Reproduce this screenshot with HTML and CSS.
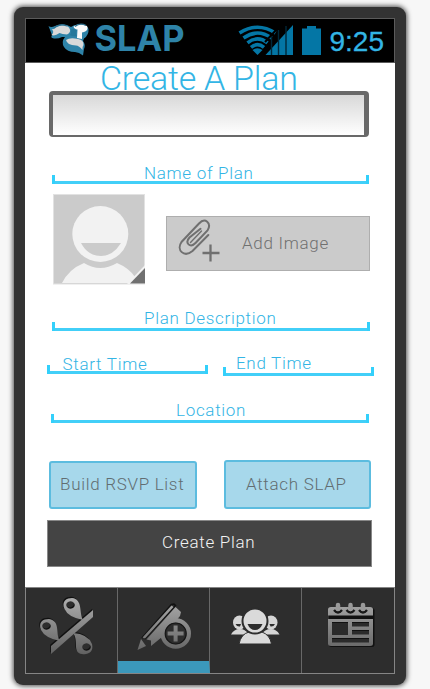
FILE: index.html
```html
<!DOCTYPE html>
<html lang="en">
<head>
<meta charset="utf-8">
<title>Create A Plan</title>
<link rel="stylesheet" href="styles.css">
</head>
<body>
<div class="phone">
  <div class="screen">
    <header class="status">
      <svg class="logo" width="140" height="43" viewBox="48 20 140 43">
        <path d="M48.500 27 L52 36 Q50 39 54 39.500 Q58 40 62 38 L65 38 Q61 43 64 48 Q67 53 75 53 Q79 53 83 56.500 L84 50 Q86 46 83 42 L84 39.500 Q89 36 88.500 30 Q87 25 80 25.500 Q74 25 71 28 Q64 23 55 27 Q51 29 48.500 27Z" fill="#2e83a8"/>
        <g fill="#d9d9d9">
          <path d="M51.500 30 Q54 31 56 28.500 Q64 24 69 28.500 Q72 33 67 35.500 Q62 35 59.500 34 Q55 37.500 51.500 36 Q55 33 51.500 30Z"/>
          <path d="M66 41 Q70 38 78 40 Q84 41 83.500 46 Q82 48 82.500 51 Q79 46.500 76 46.500 Q67 46 66 41Z"/>
        </g>
        <path d="M73.500 27.500 Q80 23.500 87 27 Q89 31 84 33 L82 33.500 V40 L77 39 L77.500 30.500 Q74 30 73.500 27.500Z" fill="#fafafa"/>
        <path d="M54 28.500 Q60 24 67 27M75 27.500 Q80 23.500 86 26.500" fill="none" stroke="#2f6f8d" stroke-width="1.200"/>
        <path d="M70.500 30.500 Q74 29 77 31.500 Q75 34 77 37 Q73 38 69.500 36 Q72 34 70.500 30.500Z" fill="#25789b"/>
        <text class="brand" x="94.500" y="52.300" textLength="90" lengthAdjust="spacingAndGlyphs">SLAP</text>
      </svg>
      <svg class="signals" width="84" height="34" viewBox="237 24 84 34">
        <g fill="none" stroke="#0476a5" stroke-width="3.600">
          <path d="M239.500 33 Q257.500 21.500 275.500 33"/>
          <path d="M243.500 38 Q257.500 28 271.500 38"/>
          <path d="M247.500 42.800 Q257.500 35 267.500 42.800"/>
          <path d="M251 47.300 Q257.500 42 264 47.300"/>
        </g>
        <path d="M252.500 50 Q257.500 46.500 262.500 50 L257.500 55Z" fill="#0476a5"/>
        <path d="M265.500 55 L293 25 V55Z" fill="#0476a5"/>
        <path d="M271.500 36V55M278.500 30V55M286 26V55" stroke="#00283a" stroke-width="1.400"/>
        <path d="M277 29 L265 42" stroke="#000" stroke-width="2"/>
        <path d="M302 28.500h5v-2.500h9v2.500h5V55h-19z" fill="#0476a5"/>
      </svg>
      <span class="clock">9:25</span>
    </header>

    <main class="form">
      <h1 class="title">Create A Plan</h1>
      <div class="input"></div>
      <div class="field name"><span>Name of Plan</span></div>
      <div class="image-row">
        <svg class="avatar" width="92" height="91" viewBox="0 0 92 91">
          <rect x=".5" y=".5" width="91" height="89.500" fill="#cbcbcb" stroke="#e2e2e2"/>
          <path d="M9 89 Q16 75 31 69 Q47 79 64 69 Q76 74 82 83 L76 89Z" fill="#f2f2f2"/>
          <circle cx="47.300" cy="40" r="28" fill="#f2f2f2"/>
          <path d="M28 49H68Q60 62 48 62Q35 62 28 49Z" fill="#cbcbcb"/>
          <path d="M74 90 L92 71V90Z" fill="#f2f2f2"/>
          <path d="M77 89.500 L92 74V89.500Z" fill="#707070"/>
        </svg>
        <div class="add-image">
          <svg width="46" height="50" viewBox="176 217 46 50" fill="none" stroke="#707070" stroke-linecap="round">
            <path d="M208.300 235 L192.500 251 C184 258 176 250 181.500 242 L199 223.500 C205 217 212 223 207.500 230.500 L195.500 243 C190 248.500 184.500 243 189.500 237.500 L200.500 228.800" stroke-width="2"/>
            <path d="M190.500 242.500 L201.500 231" stroke-width="1.400"/>
            <path d="M210.500 244.500v17M202.500 253h17" stroke-width="2.300" stroke-linecap="butt"/>
          </svg>
          <span>Add Image</span>
        </div>
      </div>
      <div class="field description"><span>Plan Description</span></div>
      <div class="times">
        <div class="field start"><span>Start Time</span></div>
        <div class="field end"><span>End Time</span></div>
      </div>
      <div class="field location"><span>Location</span></div>
      <div class="actions">
        <div class="button rsvp"><span>Build RSVP List</span></div>
        <div class="button attach"><span>Attach SLAP</span></div>
      </div>
      <div class="submit"><span>Create Plan</span></div>
    </main>

    <nav class="tabs">
      <div class="tab">
        <svg width="92" height="86" viewBox="26 587 92 86">
          <defs>
            <linearGradient id="metal" gradientUnits="userSpaceOnUse" x1="0" y1="598" x2="0" y2="654">
              <stop offset="0" stop-color="#acacac"/><stop offset="1" stop-color="#606060"/>
            </linearGradient>
            <g id="branch">
              <path d="M51 645 L93 609V616L51 653Z"/>
              <path fill-rule="evenodd" d="M83 619 Q68 616 64.500 608 C61 600 67 597 72 597 C83 598 79 612 83 619ZM67 606a4 3.300 0 1 0 7-4a4 3.300 0 1 0-7 4Z"/>
              <path fill-rule="evenodd" d="M60 640 Q45 637 41 629 C38 621 43 618 49 618 C61 620 55 633 60 640ZM43 627a4 3.300 0 1 0 7-4a4 3.300 0 1 0-7 4Z"/>
              <path fill-rule="evenodd" d="M73 632 Q88 633 92 643 C94 651 88 654 82 653 C72 652 79 639 73 632ZM83 648a4 3.300 0 1 0 7-4a4 3.300 0 1 0-7 4Z"/>
            </g>
          </defs>
          <use href="#branch" fill="#111" x="-.8" y="-1.200"/>
          <use href="#branch" fill="url(#metal)"/>
        </svg>
      </div>
      <div class="tab active">
        <svg width="92" height="86" viewBox="118 587 92 86">
          <path d="M142 637 L171.500 603.500 L174 603 L176 605 M144.500 638 L175 605" fill="none" stroke="#111" stroke-width="1.600"/>
          <g fill="url(#metal)">
            <path d="M171.500 604.500 L173.500 606 L145 637.500 L142.500 636.500Z"/>
            <path d="M175.500 606 L181 611 L180 615 L162 636 L151 645 V639.500 L146.500 638.500Z"/>
            <path d="M141 638 L146 645 L137.500 649Z"/>
            <path d="M161 637 L161 628 L170 617 L180 618Z"/>
          </g>
          <circle cx="175.700" cy="632.500" r="13" fill="#2d2d2d" stroke="url(#metal)" stroke-width="4.600"/>
          <circle cx="175.700" cy="632.500" r="10.500" fill="none" stroke="#171717" stroke-width="1.200"/>
          <path d="M173.600 624.500h4v6h6v4h-6v6h-4v-6h-6v-4h6z" fill="url(#metal)"/>
        </svg>
      </div>
      <div class="tab">
        <svg width="92" height="86" viewBox="210 587 92 86">
          <g id="side">
            <ellipse cx="239.500" cy="621.500" rx="6.500" ry="7" fill="#d5d5d5"/>
            <path d="M231 633.500 Q234 628 239.500 628 Q246 628 249 633.500Z" fill="#d5d5d5"/>
            <path d="M235.500 623 H241 L240 625.500 Q237 626 235.500 623Z" fill="#2d2d2d"/>
          </g>
          <use href="#side" transform="translate(510.500 0) scale(-1 1)"/>
          <path d="M239 643 Q241 633 249 631 H262 Q270 634 271.500 643Z" fill="#dadada" stroke="#2d2d2d"/>
          <ellipse cx="255" cy="620" rx="12.500" ry="12.500" fill="#dadada" stroke="#2d2d2d" stroke-width="2"/>
          <path d="M247.500 623 H262.500 Q260 629 255 629 Q250 629 247.500 623Z" fill="#2d2d2d"/>
        </svg>
      </div>
      <div class="tab">
        <svg width="92" height="86" viewBox="302 588 92 86">
          <rect x="329" y="608" width="45.500" height="39" rx="2.500" fill="#111"/>
          <path d="M328 615.500V609.500Q328 607 331 607H370Q373 607 373 609.500V615.500Z" fill="url(#metal)"/>
          <path d="M328 619H373V643.500Q373 646 370 646H331Q328 646 328 643.500Z" fill="url(#metal)"/>
          <path d="M332 622.500h16v12.500h-16zM352 622.500h17v4h-17zM352 630.500h17v4h-17zM332 638.500h37v4h-37z" fill="#2b2b2b"/>
          <path d="M332 622.500h16M352 622.500h17M352 630.500h17M332 638.500h37" stroke="#111" stroke-width="1.200"/>
          <path d="M334 610q4 5 8 0M346.500 610q4 5 8 0M359 610q4 5 8 0" fill="none" stroke="#181818" stroke-width="2.300"/>
          <path d="M338 605v4M350.500 605v4M363 605v4" stroke="#9a9a9a" stroke-width="4.500" stroke-linecap="round"/>
        </svg>
      </div>
    </nav>
  </div>
</div>
</body>
</html>
```
FILE: styles.css
```css
* { box-sizing: border-box; }

body {
  margin: 0;
  height: 689px;
  overflow: hidden;
  padding: 7px 0 0 14px;
  background: #f7f7f7;
  font-family: Roboto, "Liberation Sans", sans-serif;
}

.phone {
  width: 392px;
  height: 678px;
  padding: 11px;
  border-radius: 9px;
  background: #333;
  box-shadow: 0 0 5px 1px rgba(0, 0, 0, .7);
}

.screen {
  display: flex;
  flex-direction: column;
  width: 370px;
  height: 656px;
  background: #fff;
}

.status {
  display: flex;
  align-items: flex-start;
  height: 45px;
  border: 1px solid #5b5b5b;
  background: #000;
}
.logo { margin: 0 0 0 22px; overflow: visible; }
.signals { margin: 5px 0 0 49px; }
.brand { fill: #2e83a8; font: 700 36px Inter, sans-serif; }
.clock {
  margin-left: 8.5px;
  color: #33b5e5;
  font-family: "Liberation Sans", sans-serif;
  font-size: 28px;
  line-height: 46px;
  -webkit-text-stroke: .3px #33b5e5;
  white-space: nowrap;
}

.form {
  height: 524px;
  color: #33b5e5;
  font-size: 17px;
  font-weight: 300;
  letter-spacing: .7px;
  white-space: nowrap;
}

.title {
  height: 28px;
  margin: 0;
  padding-left: 75px;
  font-size: 34px;
  font-weight: 300;
  line-height: 31px;
  letter-spacing: -.25px;
}

.input {
  width: 320px;
  height: 46px;
  margin-left: 24px;
  border: solid #696969;
  border-width: 4px 5px 2px 4px;
  border-radius: 4px;
  background: linear-gradient(#d8d8d8, #fff);
}

.field {
  position: relative;
  height: 24px;
  border-bottom: 3px solid #42cff8;
  line-height: 24px;
}
.field::before,
.field::after {
  content: "";
  position: absolute;
  bottom: -3px;
  width: 3px;
  height: 9px;
  background: #33d0fb;
}
.field::before { left: 0; }
.field::after { right: 0; }

.name { width: 317px; margin: 23px 0 0 27px; padding-left: 92px; line-height: 27px; }
.description { width: 318px; margin: 22px 0 0 27px; padding-left: 92px; line-height: 22px; }
.times { display: flex; margin: 19px 0 0 22px; }
.start { width: 161px; padding-left: 15.5px; line-height: 28px; }
.end { width: 151px; margin: 2px 0 0 15px; padding-left: 13px; line-height: 22px; }
.location { width: 318px; margin: 23px 0 0 26px; padding-left: 125px; line-height: 22px; }

.image-row { display: flex; margin: 10px 0 0 28px; }
.add-image {
  display: flex;
  width: 204px;
  height: 55px;
  margin: 22px 0 0 21px;
  padding-left: 9px;
  border: 1px solid #aeaeae;
  background: #cbcbcb;
  color: #707070;
  line-height: 53px;
}
.add-image span { margin-left: 20px; }

.actions { display: flex; align-items: center; margin: 37px 0 0 24px; }
.button {
  height: 48px;
  border: 2px solid #5cbcdf;
  border-radius: 3px;
  background: #a7d8eb;
  color: #626d71;
  line-height: 43px;
}
.rsvp { width: 148px; padding-left: 9px; }
.attach { width: 147px; height: 49px; margin-left: 27px; padding-left: 20px; line-height: 45px; }

.submit {
  width: 325px;
  height: 47px;
  margin: 11px 0 0 22px;
  padding-left: 114px;
  border: 1px solid #888;
  background: #444;
  color: #f3f3f3;
  line-height: 43px;
}

.tabs {
  display: grid;
  grid-template-columns: repeat(4, 1fr);
  height: 87px;
  border: 1px solid #858585;
  background: #2d2d2d;
}
.tab { height: 85px; overflow: hidden; border-right: 1px solid #686868; }
.tab:last-child { border-right: 0; }
.tab svg { display: block; }
.active { border-bottom: 12px solid #3b98bb; }
```
